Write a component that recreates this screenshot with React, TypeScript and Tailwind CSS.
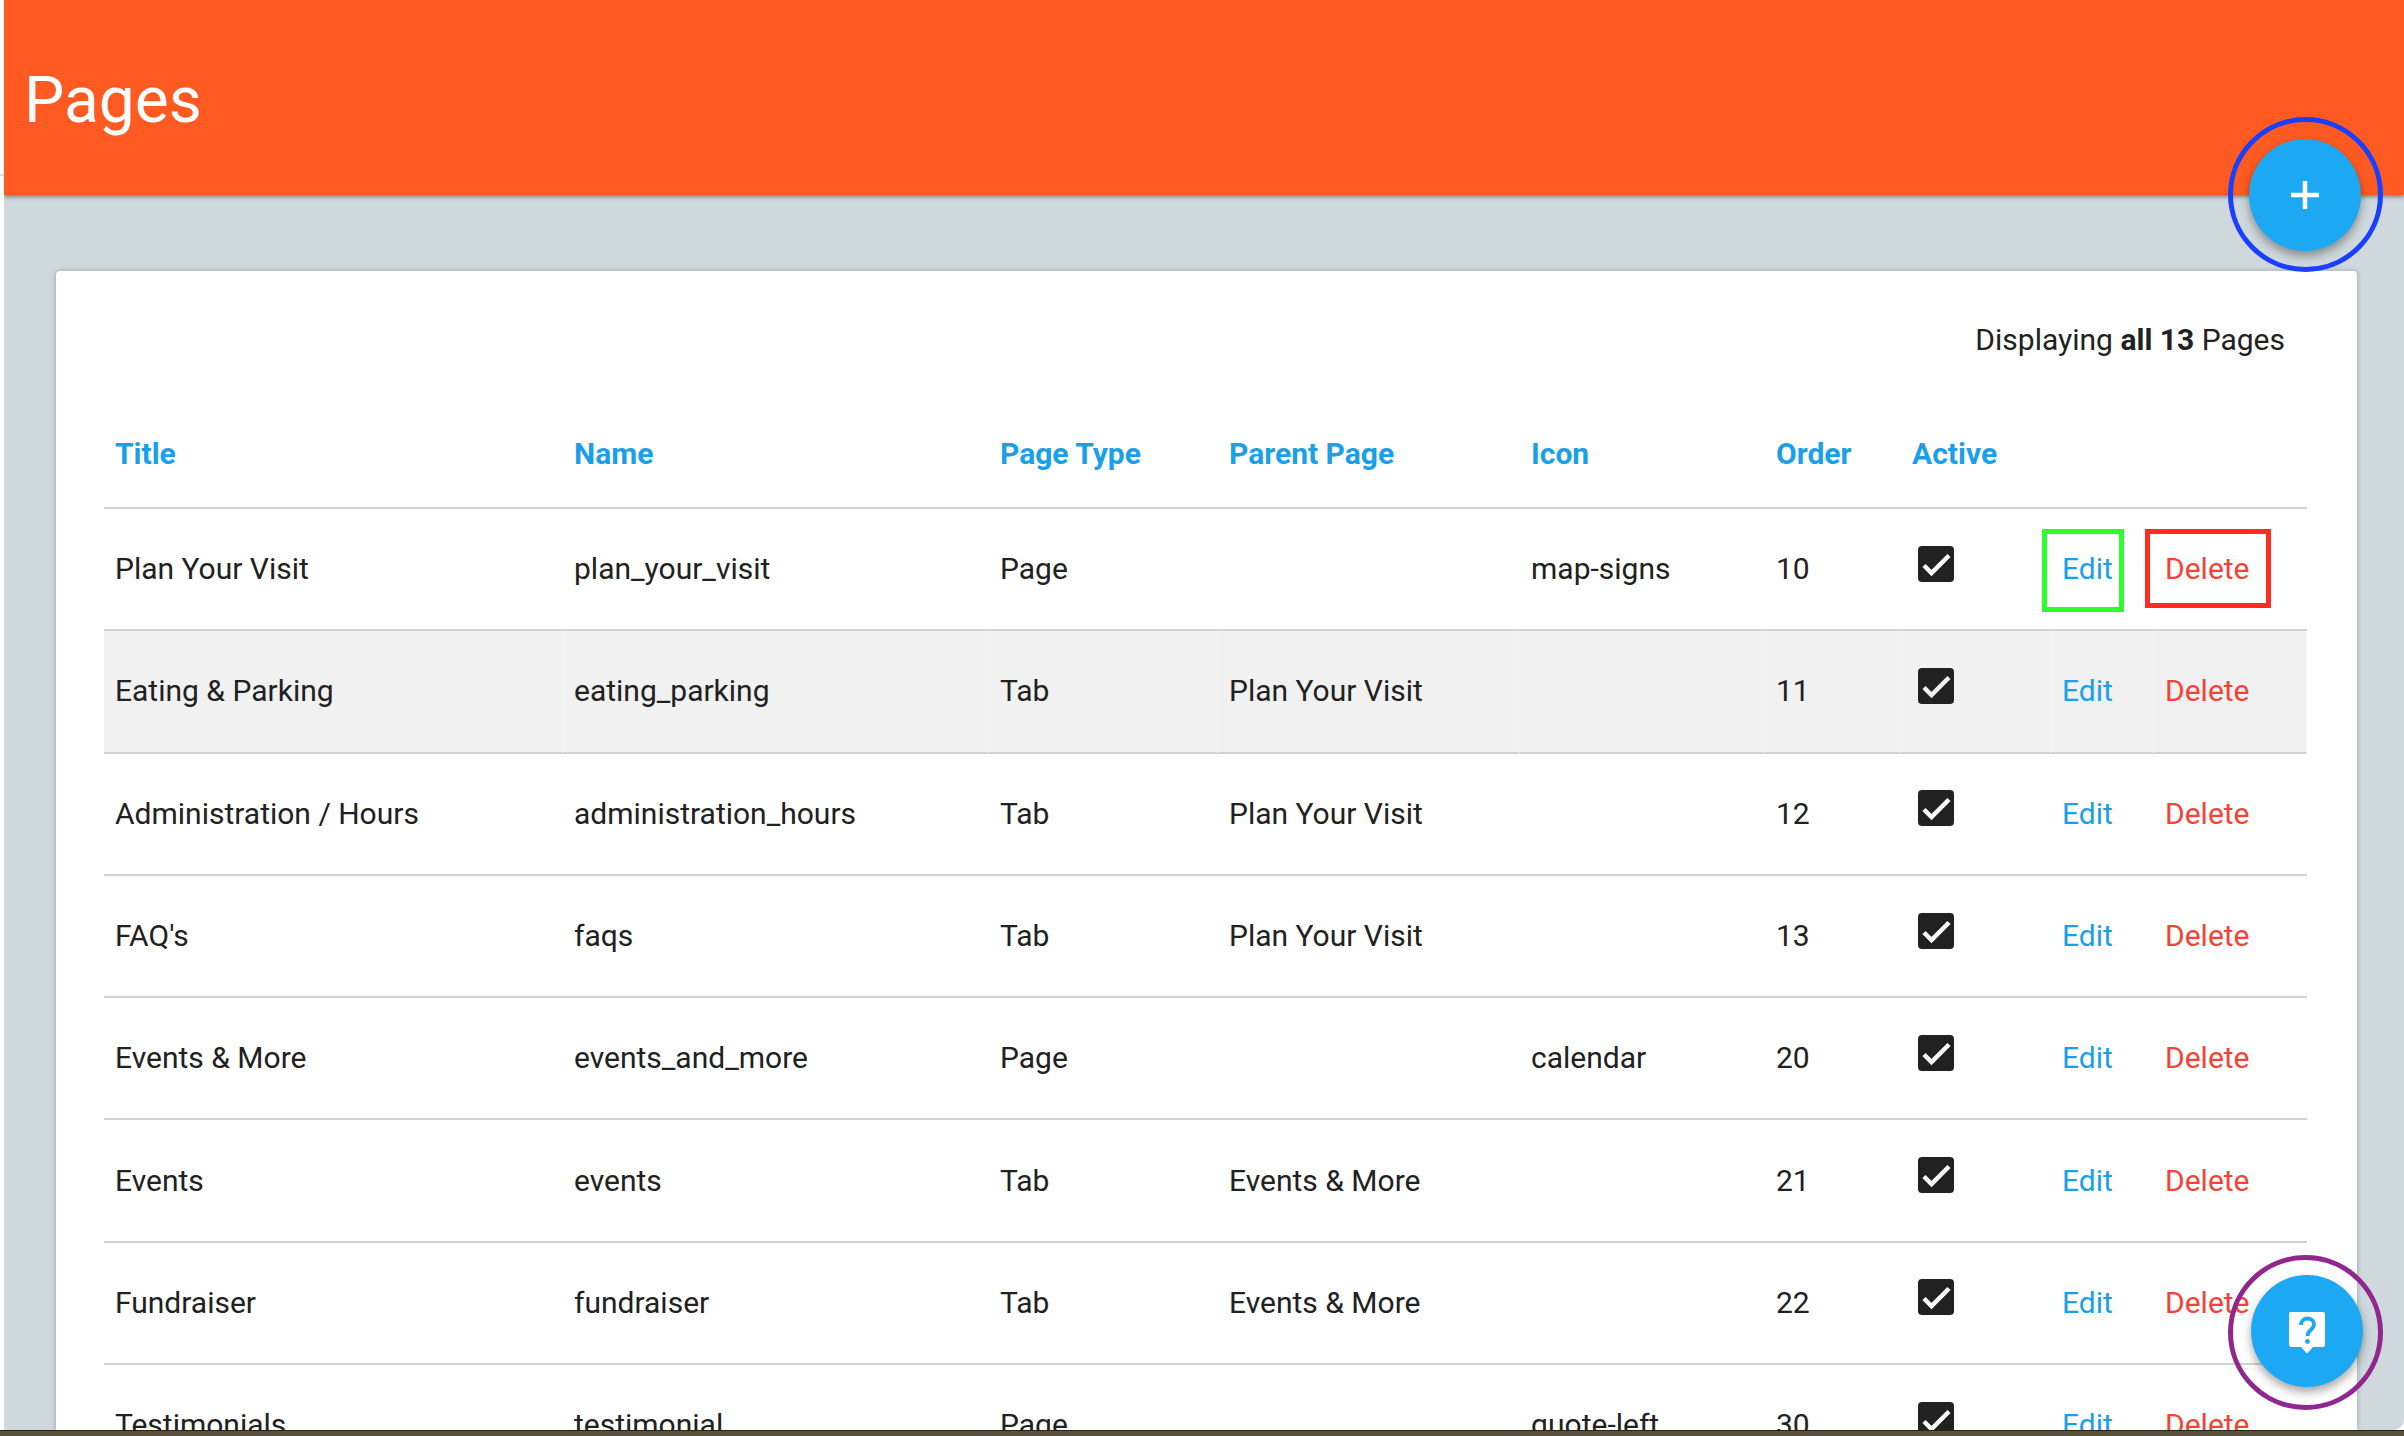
const columns = ['Title', 'Name', 'Page Type', 'Parent Page', 'Icon', 'Order', 'Active'];

const pages = [
  { title: 'Plan Your Visit', name: 'plan_your_visit', type: 'Page', parent: '', icon: 'map-signs', order: 10 },
  { title: 'Eating & Parking', name: 'eating_parking', type: 'Tab', parent: 'Plan Your Visit', icon: '', order: 11 },
  { title: 'Administration / Hours', name: 'administration_hours', type: 'Tab', parent: 'Plan Your Visit', icon: '', order: 12 },
  { title: "FAQ's", name: 'faqs', type: 'Tab', parent: 'Plan Your Visit', icon: '', order: 13 },
  { title: 'Events & More', name: 'events_and_more', type: 'Page', parent: '', icon: 'calendar', order: 20 },
  { title: 'Events', name: 'events', type: 'Tab', parent: 'Events & More', icon: '', order: 21 },
  { title: 'Fundraiser', name: 'fundraiser', type: 'Tab', parent: 'Events & More', icon: '', order: 22 },
  { title: 'Testimonials', name: 'testimonial', type: 'Page', parent: '', icon: 'quote-left', order: 30 },
];

function CheckBox() {
  return (
    <svg viewBox="0 0 36 36" className="ml-[17px] -mt-2.5 block h-9 w-9">
      <rect width="36" height="36" rx="4" fill="#212121" />
      <path d="M6 19.500l7.500 7.500L31 9.500" fill="none" stroke="currentColor" strokeWidth="4.500" />
    </svg>
  );
}

function PageRow({ page, index }: { page: (typeof pages)[number]; index: number }) {
  const hovered = index === 1;
  const cell = hovered
    ? 'border-b-2 border-b-[#d2d2d2] border-r border-r-[#f3f3f3] bg-[#f1f1f1] px-[11px] pb-[1px] align-middle font-normal whitespace-nowrap'
    : 'border-b-2 border-b-[#d2d2d2] px-[11px] pb-[1px] align-middle font-normal whitespace-nowrap';
  return (
    <tr className="h-[122.3px]">
      <td className={cell}>{page.title}</td>
      <td className={cell}>{page.name}</td>
      <td className={cell}>{page.type}</td>
      <td className={cell}>{page.parent}</td>
      <td className={cell}>{page.icon}</td>
      <td className={cell}>{page.order}</td>
      <td className={`${cell} !px-0 ${hovered ? 'text-[#f1f1f1]' : 'text-white'}`}>
        <CheckBox />
      </td>
      <td className={`${cell} relative text-[#1a9fe8]`}>
        Edit
        {index === 0 && <span className="absolute left-[-9px] top-[20px] h-[83px] w-[82px] border-[5px] border-[#2cff2c]" />}
      </td>
      <td className={`${cell} relative text-[#f44336]`}>
        Delete
        {index === 0 && <span className="absolute left-[-9px] top-[20px] h-[79px] w-[126px] border-[5px] border-[#ff2d20]" />}
      </td>
    </tr>
  );
}

function Fab({ className, ring, inner, children }: { className: string; ring: string; inner?: string; children: React.ReactNode }) {
  return (
    <div className={`absolute z-30 flex h-[155px] w-[155px] items-center justify-center rounded-full border-[5px] ${ring} ${className}`}>
      <div className={`flex h-[112px] w-[112px] items-center justify-center rounded-full bg-[#1da8f3] shadow-[0_5px_10px_rgba(0,0,0,0.35)] ${inner ?? ''}`}>
        {children}
      </div>
    </div>
  );
}

export default function App() {
  return (
    <div className="relative flex h-[1436px] w-[2404px] flex-col overflow-hidden bg-white font-['Roboto',sans-serif] text-[30px] text-[#212121]">
      <span className="absolute left-0 top-[174px] h-[2px] w-1 bg-[#dedede]" />
      <div className="ml-1 flex min-h-0 flex-1 flex-col overflow-hidden rounded-br-[10px] bg-[#cfd8dc]">
        <header className="relative z-10 flex h-[195px] shrink-0 items-center bg-[#ff5a22] pt-[6px] pl-5 shadow-[0_2px_4px_rgba(0,0,0,0.4)]">
          <h1 className="text-[64px] leading-none text-white">Pages</h1>
        </header>

        <main className="mt-[76px] mr-[47px] ml-[52px] min-h-0 flex-1 rounded-t-[4px] bg-white pt-[51px] pr-[50px] pl-12 shadow-[0_0_5px_rgba(0,0,0,0.25)]">
          <p className="pr-[22px] text-right leading-[36px]">
            Displaying <b className="font-bold">all 13</b> Pages
          </p>
          <table className="mt-[42px] w-[2203px] table-fixed border-separate border-spacing-0">
            <colgroup>
              <col className="w-[459px]" />
              <col className="w-[426px]" />
              <col className="w-[229px]" />
              <col className="w-[302px]" />
              <col className="w-[245px]" />
              <col className="w-[136px]" />
              <col className="w-[150px]" />
              <col className="w-[103px]" />
              <col className="w-[153px]" />
            </colgroup>
            <thead>
              <tr className="h-[109px]">
                {columns.map((col) => (
                  <th key={col} className="border-b-2 border-b-[#d2d2d2] px-[11px] text-left font-bold text-[#1a9fe8]">
                    {col}
                  </th>
                ))}
                <th className="border-b-2 border-b-[#d2d2d2]" />
                <th className="border-b-2 border-b-[#d2d2d2]" />
              </tr>
            </thead>
            <tbody>
              {pages.map((page, i) => (
                <PageRow key={page.name} page={page} index={i} />
              ))}
            </tbody>
          </table>
        </main>
      </div>

      <div className="relative z-20 h-1.5 shrink-0 border-t border-t-[#26231a] bg-[#5b5039]" />

      <Fab className="left-[2228px] top-[117px]" ring="border-[#1a3fff]" inner="mr-[2px]">
        <svg viewBox="0 0 28 28" className="h-7 w-7" fill="none" stroke="white" strokeWidth="4.500">
          <path d="M14 0v28M0 14h28" />
        </svg>
      </Fab>

      <Fab className="left-[2228px] top-[1255px]" ring="border-[#90278e]" inner="mb-[4px] ml-[3px]">
        <svg viewBox="0 0 36 42" className="mt-[4px] h-[42px] w-9">
          <path d="M2 0h32a2 2 0 0 1 2 2v31a2 2 0 0 1-2 2h-10l-6 6.500-6-6.500H2a2 2 0 0 1-2-2V2a2 2 0 0 1 2-2z" fill="white" />
          <path d="M12 13c0-4 2.800-6.500 6.500-6.500 3.800 0 6.500 2.500 6.500 5.800 0 5.500-6.500 5.500-6.500 11.700" fill="none" stroke="#1da8f3" strokeWidth="3.800" />
          <circle cx="18.500" cy="29.500" r="2.400" fill="#1da8f3" />
        </svg>
      </Fab>
    </div>
  );
}
